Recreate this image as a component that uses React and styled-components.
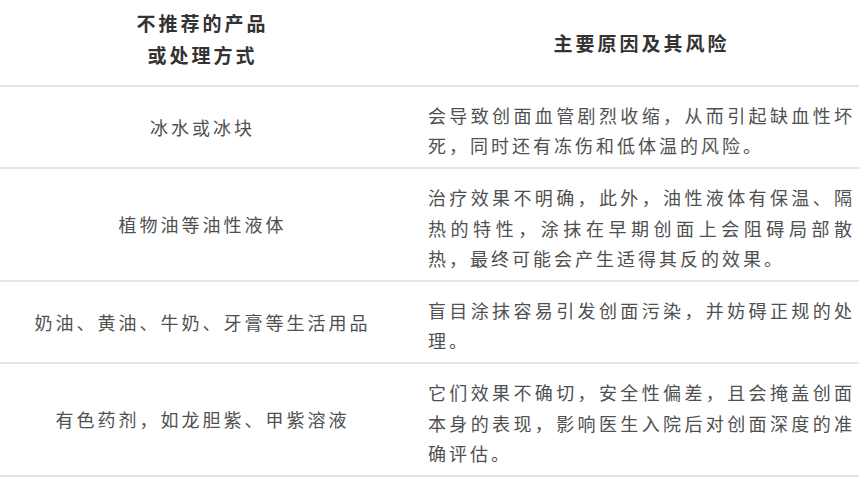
import styled, { createGlobalStyle } from "styled-components";

const GlobalStyle = createGlobalStyle`
  html, body {
    margin: 0;
    padding: 0;
    background: #ffffff;
  }
  body {
    font-family: "Noto Sans CJK SC", "Noto Sans", sans-serif;
  }
`

const Table = styled.div`
  display: grid;
  grid-template-columns: 402px 457px;
  width: 859px;
`

const Row = styled.div`
  display: contents;
`

const HeadCell = styled.div`
  display: flex;
  flex-direction: column;
  align-items: center;
  justify-content: ${ ({ $top }) => $top ? 'flex-start' : 'center' };
  padding: ${ ({ $top }) => $top ? '7px 23px 13px 26px' : '2px 4px 0 26px' };
  border-bottom: 2px solid #e4e4e4;
  font-size: 19px;
  font-weight: 700;
  letter-spacing: 3px;
  line-height: 32.4px;
  color: #333333;
  text-align: center;
`

const NameCell = styled.div`
  display: flex;
  align-items: center;
  justify-content: center;
  padding: 0 23px 0 26px;
  border-bottom: 2px solid #e4e4e4;
  font-size: 18px;
  letter-spacing: 3px;
  line-height: 30.6px;
  color: #505050;
  text-align: center;
`

const ReasonCell = styled.div`
  padding: 13px 4px 6px 26px;
  border-bottom: 2px solid #e4e4e4;
  font-size: 18px;
  letter-spacing: 3px;
  line-height: 30.6px;
  color: #505050;
  text-align: justify;
`

const rows = [
  {
    name: '冰水或冰块',
    reason: '会导致创面血管剧烈收缩，从而引起缺血性坏死，同时还有冻伤和低体温的风险。',
  },
  {
    name: '植物油等油性液体',
    reason: '治疗效果不明确，此外，油性液体有保温、隔热的特性，涂抹在早期创面上会阻碍局部散热，最终可能会产生适得其反的效果。',
  },
  {
    name: '奶油、黄油、牛奶、牙膏等生活用品',
    reason: '盲目涂抹容易引发创面污染，并妨碍正规的处理。',
  },
  {
    name: '有色药剂，如龙胆紫、甲紫溶液',
    reason: '它们效果不确切，安全性偏差，且会掩盖创面本身的表现，影响医生入院后对创面深度的准确评估。',
  },
]

const App = () => (
  <>
    <GlobalStyle/>
    <Table>
      <Row>
        <HeadCell $top>
          <div>不推荐的产品</div>
          <div>或处理方式</div>
        </HeadCell>
        <HeadCell>主要原因及其风险</HeadCell>
      </Row>
      {
        rows.map(row => <Row key={ row.name }>
          <NameCell>{ row.name }</NameCell>
          <ReasonCell>{ row.reason }</ReasonCell>
        </Row>)
      }
    </Table>
  </>
)

export default App;
